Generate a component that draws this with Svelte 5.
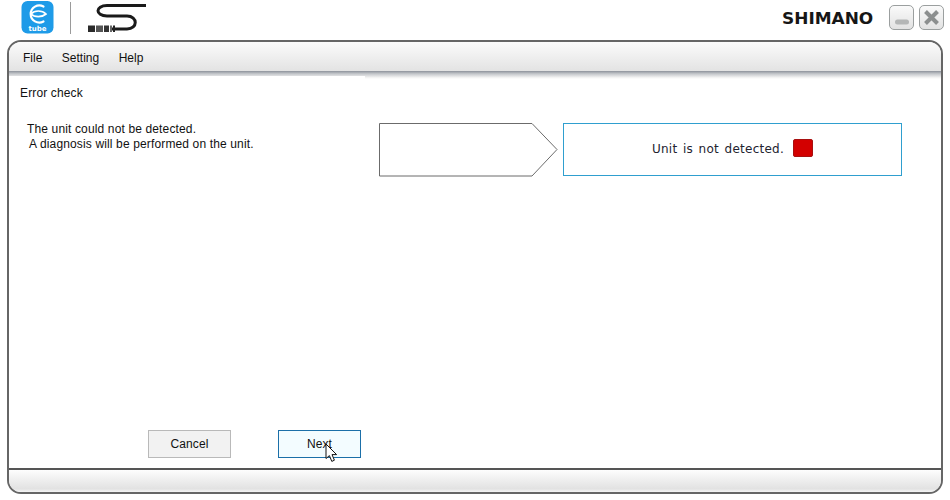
<script>
  const menus = ['File', 'Setting', 'Help'];
</script>

<div class="page">
  <header class="top">
    <div class="etube">
      <svg width="33" height="34" viewBox="0 0 33 34">
        <rect x="0.5" y="1" width="32" height="32.5" rx="6" fill="#1e9be8" />
        <path d="M22.5 6.5 A8.6 8.6 0 1 0 22.5 21.5" fill="none" stroke="#fff" stroke-width="2.2" stroke-linecap="round" />
        <path d="M10 14 C13.5 10 21 10 25 14 C21 17.5 13.5 17.5 10 14 Z" fill="none" stroke="#fff" stroke-width="1.7" />
      </svg>
      <span class="tube">tube</span>
    </div>
    <div class="divider"></div>
    <svg class="s-logo" width="60" height="30" viewBox="0 0 60 30">
      <path d="M59 2.5 H20 C8 2.5 8 13 20 13 H40 C51 13 51 26 40 26 H25" fill="none" stroke="#1a1a1a" stroke-width="3" />
      <rect x="1" y="22.5" width="7" height="6.5" fill="#2a2a2a" />
      <rect x="9" y="22.5" width="7" height="6.5" fill="#555" />
      <rect x="17" y="22.5" width="5" height="6.5" fill="#333" />
      <rect x="23" y="22.5" width="2" height="6.5" fill="#666" />
      <rect x="26" y="22.5" width="2" height="6.5" fill="#222" />
    </svg>
    <div class="spacer"></div>
    <span class="shimano">SHIMANO</span>
    <button class="win-btn" aria-label="Minimize">
      <svg class="dash" width="14" height="6" viewBox="0 0 14 6"><rect x="0" y="0.5" width="14" height="5" rx="2.5" fill="#b4b6b6" /></svg>
    </button>
    <button class="win-btn" aria-label="Close">
      <svg width="17" height="17" viewBox="0 0 17 17"><path d="M2.5 2.5 L14.5 14.5 M14.5 2.5 L2.5 14.5" stroke="#8c8f8f" stroke-width="4" /></svg>
    </button>
  </header>

  <div class="window">
    <nav class="menu">
      {#each menus as m}
        <span>{m}</span>
      {/each}
    </nav>
    <div class="shade"></div>
    <main class="content">
      <section class="left">
        <div class="title">Error check</div>
        <p class="msg">The unit could not be detected.<br /><span class="indent">A diagnosis will be performed on the unit.</span></p>
        <div class="actions">
          <button class="btn">Cancel</button>
          <button class="btn next">Next</button>
          <svg class="cursor" width="13" height="20" viewBox="0 0 13 20">
            <path d="M1 1 V15.5 L4.4 12.6 L6.8 18.4 L9.4 17.2 L7 11.6 H11.6 Z" fill="#fff" stroke="#111" stroke-width="1" />
          </svg>
        </div>
      </section>
      <section class="right">
        <svg class="arrow" width="179" height="54" viewBox="0 0 179 54">
          <path d="M0.5 0.5 H153 L178 26.5 L153 53 H0.5 Z" fill="#fff" stroke="#6b6b6b" stroke-width="1" />
        </svg>
        <div class="status">
          <span class="status-text">Unit is not detected.</span>
          <i class="red"></i>
        </div>
      </section>
    </main>
    <footer class="foot"></footer>
  </div>
</div>

<style>
  :global(body) {
    margin: 0;
    background: #fff;
  }
  .page {
    width: 950px;
    height: 500px;
    overflow: hidden;
    background: #fff;
    font-family: "Liberation Sans", Arial, sans-serif;
    color: #111;
    display: flex;
    flex-direction: column;
  }
  .top {
    height: 40px;
    flex: none;
    display: flex;
    align-items: flex-start;
    padding: 0 6px 0 21px;
    box-sizing: border-box;
  }
  .etube {
    width: 33px;
    height: 34px;
    position: relative;
  }
  .tube {
    position: absolute;
    left: 0;
    right: 0;
    top: 25px;
    text-align: center;
    color: #fff;
    font: bold 7px/8px "DejaVu Sans", sans-serif;
  }
  .divider {
    width: 1px;
    height: 32px;
    margin: 2px 16px 0;
    background: #9a9a9a;
  }
  .s-logo {
    margin-top: 3px;
  }
  .spacer {
    flex: 1;
  }
  .shimano {
    font: bold 15px/14px "DejaVu Sans", sans-serif;
    color: #161616;
    margin: 12px 11px 0 0;
    width: 91px;
    white-space: nowrap;
    transform: scaleX(1.13);
    transform-origin: left center;
  }
  .win-btn {
    width: 25px;
    height: 25px;
    margin: 5px 0 0 5px;
    padding: 0;
    border: 1px solid #9b9f9f;
    border-radius: 5px;
    background: linear-gradient(#fafafa, #e2e2e2);
    display: flex;
    align-items: center;
    justify-content: center;
  }
  .dash {
    margin-top: 8px;
  }
  .window {
    width: 936px;
    height: 454px;
    margin-left: 7px;
    box-sizing: border-box;
    border: 2px solid #666;
    border-radius: 14px;
    overflow: hidden;
    display: flex;
    flex-direction: column;
    background: #fff;
    flex: none;
  }
  .menu {
    height: 29px;
    flex: none;
    display: flex;
    align-items: center;
    gap: 19.5px;
    padding: 2px 0 0 14px;
    box-sizing: border-box;
    font-size: 12px;
    background: linear-gradient(#fbfbfb, #e3e3e3);
  }
  .shade {
    height: 8px;
    flex: none;
    background: linear-gradient(#8d929b, #c4c7cb 35%, #f2f2f2 80%, #fff);
  }
  .content {
    flex: 1;
    min-height: 0;
    display: flex;
    position: relative;
  }
  .left {
    width: 356px;
    flex: none;
    margin-top: -3px;
    background: #fff;
    position: relative;
    padding: 10px 0 0 11px;
    box-sizing: border-box;
    display: flex;
    flex-direction: column;
    font-size: 12px;
    letter-spacing: 0.14px;
  }
  .title {
    line-height: 14px;
  }
  .msg {
    margin: 22px 0 0 7px;
    line-height: 15px;
  }
  .indent {
    margin-left: 2px;
  }
  .actions {
    margin-top: auto;
    margin-bottom: 10px;
    margin-left: 128px;
    display: flex;
    gap: 47px;
    position: relative;
  }
  .btn {
    width: 83px;
    height: 28px;
    padding: 0;
    font: 12px "Liberation Sans", Arial, sans-serif;
    letter-spacing: 0.1px;
    color: #111;
    background: #f2f2f2;
    border: 1px solid #b9b9b9;
  }
  .next {
    background: #f3fcff;
    border-color: #1b6fa8;
  }
  .cursor {
    position: absolute;
    left: 177px;
    top: 13px;
  }
  .right {
    flex: 1;
    display: flex;
    align-items: flex-start;
    padding: 44px 0 0 14px;
    gap: 5px;
  }
  .arrow {
    flex: none;
  }
  .status {
    width: 339px;
    height: 53px;
    box-sizing: border-box;
    border: 1px solid #2f9fcf;
    padding-bottom: 3px;
    display: flex;
    align-items: center;
    justify-content: center;
    gap: 9px;
    font: 12px "DejaVu Sans", sans-serif;
    letter-spacing: 0.25px;
    word-spacing: 1.5px;
    color: #23232f;
  }
  .status-text {
    margin-top: 2px;
  }
  .red {
    display: block;
    width: 20px;
    height: 18px;
    background: #d30000;
    border: 1px solid #a81010;
    box-sizing: border-box;
    border-radius: 2px;
  }
  .foot {
    height: 22px;
    flex: none;
    border-top: 2px solid #555;
    background: linear-gradient(#fdfdfd, #e2e2e2 85%, #f4f4f4);
  }
</style>
